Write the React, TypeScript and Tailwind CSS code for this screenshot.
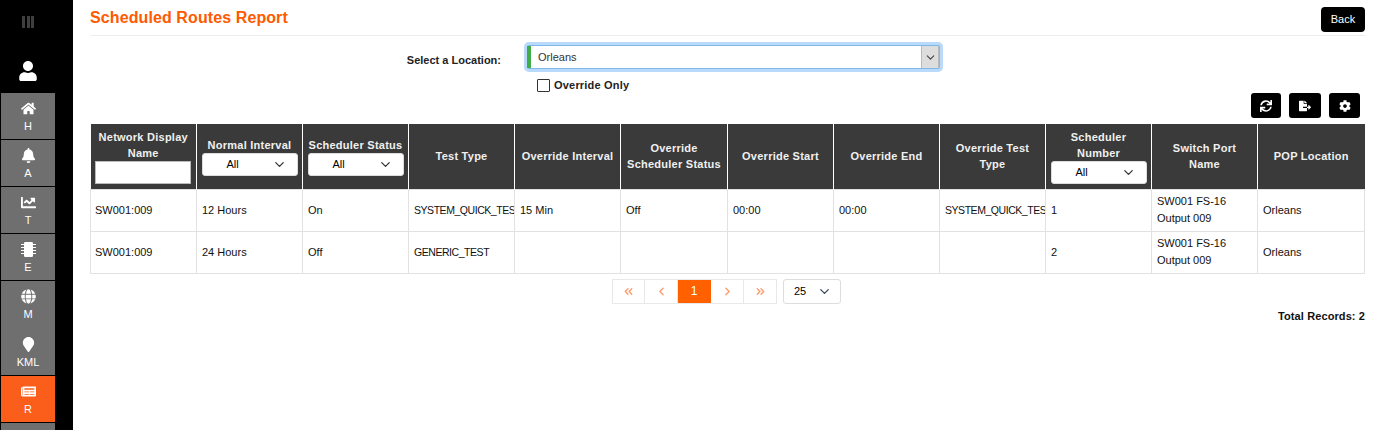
import React from "react";
import { FaHome, FaBell, FaChartLine, FaGlobe, FaMapMarker, FaNewspaper, FaUser, FaSync, FaFileExport, FaCog } from "react-icons/fa";
import { FiChevronDown, FiChevronLeft, FiChevronRight, FiChevronsLeft, FiChevronsRight } from "react-icons/fi";

function NavItem({ icon, label, active, h = "h-[46px]", pt = "pt-[6px]" }: { icon: React.ReactNode; label: string; active?: boolean; h?: string; pt?: string }) {
  return (
    <div className={`${h} ${pt} flex flex-col items-center text-white text-[11px] leading-[14px] ${active ? "bg-[#fb5d1a]" : "bg-[#6f6f6f]"}`}>
      <div className="h-[18px] flex items-center text-[15px]">{icon}</div>
      <div className="mt-[2px]">{label}</div>
    </div>
  );
}

function Chip() {
  return (
    <svg width="15" height="15" viewBox="0 0 15 15" fill="white">
      <rect x="3" y="0" width="9" height="15" rx="1.2" />
      <path d="M0 2h3v1H0zM0 5h3v1H0zM0 8h3v1H0zM0 11h3v1H0zM12 2h3v1h-3zM12 5h3v1h-3zM12 8h3v1h-3zM12 11h3v1h-3z" />
    </svg>
  );
}

function FilterSelect() {
  return (
    <div className="mx-auto w-[96px] h-[23px] bg-white rounded-[3px] border border-[#ddd] flex items-center justify-between pl-[24px] pr-[10px] text-[11px] font-normal tracking-normal text-black">
      <span>All</span>
      <FiChevronDown className="text-[#333] text-[15px]" />
    </div>
  );
}

const heads: { t: React.ReactNode; f?: React.ReactNode; w: string }[] = [
  { w: "w-[106px]", t: <>Network Display<br />Name</>, f: <div className="mx-auto w-[96px] h-[23px] bg-white border border-[#bbb]" /> },
  { w: "w-[106px]", t: "Normal Interval", f: <FilterSelect /> },
  { w: "w-[106px]", t: "Scheduler Status", f: <FilterSelect /> },
  { w: "w-[106px]", t: "Test Type" },
  { w: "w-[106px]", t: "Override Interval" },
  { w: "w-[107px]", t: <>Override<br />Scheduler Status</> },
  { w: "w-[106px]", t: "Override Start" },
  { w: "w-[106px]", t: "Override End" },
  { w: "w-[106px]", t: <>Override Test<br />Type</> },
  { w: "w-[106px]", t: <>Scheduler<br />Number</>, f: <FilterSelect /> },
  { w: "w-[106px]", t: <>Switch Port<br />Name</> },
  { w: "w-[107px]", t: "POP Location" },
];

const Caps = ({ children }: { children: React.ReactNode }) => (
  <span className="text-[10.5px] tracking-[-0.45px]">{children}</span>
);

const port = <>SW001 FS-16<br />Output 009</>;
const rows: React.ReactNode[][] = [
  ["SW001:009", "12 Hours", "On", <Caps>SYSTEM_QUICK_TEST</Caps>, "15 Min", "Off", "00:00", "00:00", <Caps>SYSTEM_QUICK_TEST</Caps>, "1", port, "Orleans"],
  ["SW001:009", "24 Hours", "Off", <Caps>GENERIC_TEST</Caps>, "", "", "", "", "", "2", port, "Orleans"],
];

function PageCell({ children, active }: { children: React.ReactNode; active?: boolean }) {
  return (
    <div className={`w-[33px] flex items-center justify-center border-r first:border-l ${active ? "bg-[#ff6000] border-[#ff6000] text-white text-[12px]" : "border-[#e8e8e8] text-[#ff9a66] text-[13px]"}`}>
      {children}
    </div>
  );
}

function ToolBtn({ w, children }: { w: string; children: React.ReactNode }) {
  return <div className={`${w} h-[25px] bg-black rounded-[3px] text-white flex items-center justify-center text-[12px]`}>{children}</div>;
}

export default function App() {
  return (
    <div className="flex h-[430px] w-[1375px] overflow-hidden bg-white text-black font-['Liberation_Sans',Arial,sans-serif]">
      <aside className="w-[73px] shrink-0 bg-black pl-[1px] pr-[18px] overflow-hidden">
        <div className="h-[93px] flex flex-col items-center">
          <div className="mt-[16px] flex gap-[1.5px]">
            <span className="w-[3px] h-[12px] bg-[#3f3f3f]" />
            <span className="w-[3px] h-[12px] bg-[#3f3f3f]" />
            <span className="w-[3px] h-[12px] bg-[#3f3f3f]" />
          </div>
          <FaUser className="mt-[33px] text-white text-[20px]" />
        </div>
        <div className="flex flex-col gap-[1px]">
          <NavItem icon={<FaHome />} label="H" />
          <NavItem icon={<FaBell />} label="A" />
          <NavItem icon={<FaChartLine />} label="T" />
          <NavItem icon={<Chip />} label="E" />
          <div className="bg-[#6f6f6f]">
            <NavItem icon={<FaGlobe />} label="M" />
            <NavItem icon={<FaMapMarker />} label="KML" h="h-[48px]" pt="pt-[8px]" />
          </div>
          <NavItem icon={<FaNewspaper />} label="R" active />
          <NavItem icon={null} label="" />
        </div>
      </aside>

      <main className="flex-1 min-w-0 pl-[17px] pr-[10px]">
        <div className="h-[36px] flex items-start justify-between border-b border-[#eeeeee]">
          <h1 className="mt-[8px] text-[16px] leading-[20px] font-bold tracking-[0.1px] text-[#ff5a00]">Scheduled Routes Report</h1>
          <button className="mt-[7px] w-[44px] h-[25px] bg-black text-white rounded-[4px] text-[11px]">Back</button>
        </div>

        <div className="mt-[9px] flex items-start">
          <label className="w-[411px] mt-[9px] text-right text-[11px] leading-[13px] font-bold text-[#222]">Select a Location:</label>
          <div className="ml-[26px] w-[413px] h-[24px] flex items-center border-y border-r border-[#7db8ea] ring-[3px] ring-[#b9dafa] rounded-[2px] text-[11px] text-[#333] bg-white">
            <span className="w-[4px] h-full bg-[#3fae49] shrink-0" />
            <span className="flex-1 pl-[7px]">Orleans</span>
            <div className="w-[18px] h-full bg-[#dddddd] border-x border-[#bbb] flex items-center justify-center">
              <FiChevronDown className="text-[#444] text-[13px]" />
            </div>
          </div>
        </div>

        <div className="mt-[10px] ml-[447px] flex items-center h-[13px]">
          <span className="w-[13px] h-[13px] border border-[#333] rounded-[1px] bg-white" />
          <span className="ml-[4px] text-[11px] font-bold tracking-[0.2px] text-[#222]">Override Only</span>
        </div>

        <div className="mt-[1px] flex justify-end pr-[5px] gap-[8px]">
          <ToolBtn w="w-[30px]"><FaSync /></ToolBtn>
          <ToolBtn w="w-[32px]"><FaFileExport /></ToolBtn>
          <ToolBtn w="w-[31px]"><FaCog /></ToolBtn>
        </div>

        <table className="mt-[6px] w-[1274px] table-fixed border-collapse text-[11px]">
          <colgroup>
            {heads.map((h, i) => <col key={i} className={h.w} />)}
          </colgroup>
          <thead>
            <tr className="h-[65px]">
              {heads.map((h, i) => (
                <th key={i} className="bg-[#3a3a3a] border-x border-white first:border-l-0 last:border-r-0 p-0 text-center align-middle text-[#f0f0f0] font-bold leading-[16px] tracking-[0.25px]">
                  <div>{h.t}</div>
                  {h.f}
                </th>
              ))}
            </tr>
          </thead>
          <tbody>
            {rows.map((r, ri) => (
              <tr key={ri} className="h-[42px]">
                {r.map((c, ci) => (
                  <td key={ci} className="border border-[#e2e2e2] pl-[5px] first:pl-[4px] pr-0 py-0 align-middle leading-[17px] text-[#111] overflow-hidden whitespace-nowrap">{c}</td>
                ))}
              </tr>
            ))}
          </tbody>
        </table>

        <div className="mt-[5px] ml-[522px] flex items-center">
          <div className="flex h-[25px] border-y border-[#e8e8e8]">
            <PageCell><FiChevronsLeft strokeWidth={2.5} /></PageCell>
            <PageCell><FiChevronLeft strokeWidth={2.5} /></PageCell>
            <PageCell active>1</PageCell>
            <PageCell><FiChevronRight strokeWidth={2.5} /></PageCell>
            <PageCell><FiChevronsRight strokeWidth={2.5} /></PageCell>
          </div>
          <div className="ml-[6px] w-[58px] h-[25px] border border-[#dddddd] rounded-[3px] flex items-center justify-between pl-[10px] pr-[8px] text-[11px]">
            <span>25</span>
            <FiChevronDown className="text-[#345] text-[15px]" />
          </div>
        </div>

        <div className="mt-[6px] text-right text-[11px] leading-[13px] font-bold tracking-[0.1px] text-[#111]">Total Records: 2</div>
      </main>
    </div>
  );
}
